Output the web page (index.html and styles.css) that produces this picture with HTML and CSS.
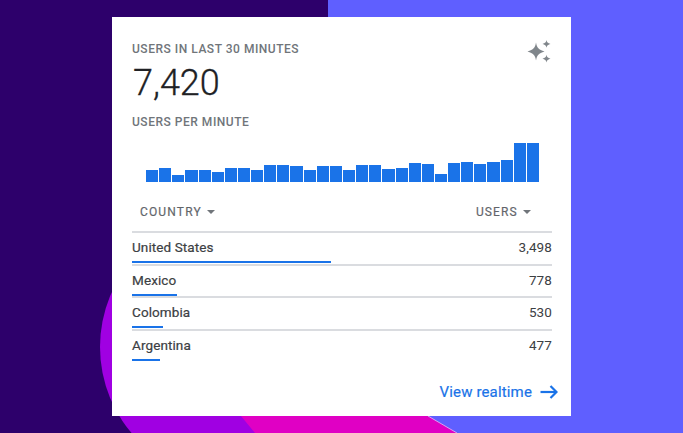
FILE: index.html
```html
<!DOCTYPE html>
<html lang="en">
<head>
    <meta charset="UTF-8">
    <title>Realtime card</title>
    <link rel="stylesheet" href="styles.css">
</head>
<body>
    <svg class="backdrop" width="683" height="433" viewBox="0 0 683 433">
        <rect width="683" height="433" fill="#5f5fff"/>
        <rect width="328" height="433" fill="#2d006b"/>
        <circle cx="233" cy="347" r="133" fill="#a000e2"/>
        <polygon points="241,416 428,416 457,433 255,433" fill="#e000c4"/>
        <line x1="428" y1="416" x2="457" y2="433" stroke="#d9a0f0" stroke-width="1"/>
    </svg>

    <div class="card">
        <div class="top">
            <div>
                <div class="label">USERS IN LAST 30 MINUTES</div>
                <div class="total">7,420</div>
            </div>
            <svg class="sparkle" width="24" height="24" viewBox="0 0 24 24">
                <path d="M9 2.5 C10 8 11.5 9.5 17.5 11.5 C11.5 13.5 10 15 9 20.5 C8 15 6.500 13.500 0.500 11.500 C6.500 9.500 8 8 9 2.500Z"/>
                <path d="M19.500 0 C20 2.400 20.500 2.900 23.500 3.900 C20.500 4.900 20 5.400 19.500 7.800 C19 5.400 18.500 4.900 15.500 3.900 C18.500 2.900 19 2.400 19.500 0Z"/>
                <path d="M19.500 14.800 C20 17.200 20.500 17.700 23.500 18.700 C20.500 19.700 20 20.200 19.500 22.600 C19 20.200 18.500 19.700 15.500 18.700 C18.500 17.700 19 17.200 19.500 14.800Z"/>
            </svg>
        </div>

        <div class="label sub">USERS PER MINUTE</div>

        <div class="chart" id="chart"></div>

        <div class="head">
            <span class="sort">COUNTRY <i class="caret"></i></span>
            <span class="sort">USERS <i class="caret"></i></span>
        </div>

        <div class="row">
            <div class="row-text"><span>United States</span><span class="num">3,498</span></div>
            <div class="meter" style="width: 199px"></div>
        </div>
        <div class="row">
            <div class="row-text"><span>Mexico</span><span class="num">778</span></div>
            <div class="meter" style="width: 45px"></div>
        </div>
        <div class="row">
            <div class="row-text"><span>Colombia</span><span class="num">530</span></div>
            <div class="meter" style="width: 31px"></div>
        </div>
        <div class="row last">
            <div class="row-text"><span>Argentina</span><span class="num">477</span></div>
            <div class="meter" style="width: 28px"></div>
        </div>

        <div class="foot">
            <span>View realtime</span>
            <svg width="18" height="14" viewBox="0 0 18 14" fill="none" stroke="#1a73e8" stroke-width="2.2">
                <path d="M0.5 7 H16"/>
                <path d="M10.5 1 L16.5 7 L10.5 13"/>
            </svg>
        </div>
    </div>

    <script>
        // users per minute
        let values = [12,14,7,12,12,10,14,14,12,17,17,16,12,16,16,12,17,17,13,14,19,18,8,19,20,18,20,22,39,39]
        let chart = document.getElementById("chart")
        for (let i = 0; i < values.length; i++) {
            let bar = document.createElement("div")
            bar.className = "bar"
            bar.style.height = values[i] + "px"
            chart.appendChild(bar)
        }
    </script>
</body>
</html>
```

FILE: styles.css
```css
html, body {
    margin: 0;
    height: 433px;
    overflow: hidden;
}

body {
    font-family: Roboto, Arial, sans-serif;
}

/* decoration behind the card */
.backdrop {
    position: absolute;
    left: 0;
    top: 0;
}

.card {
    position: relative;
    box-sizing: border-box;
    width: 459px;
    height: 399px;
    margin: 17px 0 0 112px;
    padding: 25px 19px 0 20px;
    background-color: #ffffff;
}

.top {
    display: flex;
    justify-content: space-between;
}

.label {
    font-size: 12px;
    line-height: 14px;
    font-weight: 500;
    letter-spacing: 0.52px;
    color: #70757a;
}

.total {
    margin-top: 6px;
    margin-left: 1px;
    font-size: 36px;
    line-height: 42px;
    font-weight: 300;
    -webkit-text-stroke: 0.3px #202124;
    color: #202124;
}

.sparkle {
    fill: #80868b;
    margin: -2px 1px 0 0;
}

.sub {
    margin-top: 11px;
}

.chart {
    display: grid;
    grid-template-columns: repeat(30, 1fr);
    column-gap: 1px;
    align-items: end;
    width: 393px;
    height: 40px;
    margin: 13px 0 0 14px;
}

.bar {
    background-color: #1a73e8;
}

.head {
    display: flex;
    justify-content: space-between;
    height: 51px;
    box-sizing: border-box;
    padding: 23px 21px 0 8px;
    border-bottom: 2px solid #dadce0;
}

.sort {
    font-size: 12px;
    line-height: 14px;
    font-weight: 400;
    letter-spacing: 1.15px;
    -webkit-text-stroke: 0.2px #70757a;
    color: #5f6368;
}

.caret {
    display: inline-block;
    width: 0;
    height: 0;
    margin-left: 1px;
    vertical-align: 2px;
    border-left: 4px solid transparent;
    border-right: 4px solid transparent;
    border-top: 4px solid #70757a;
}

.row {
    height: 32.5px;
    box-sizing: border-box;
    border-bottom: 2px solid #dadce0;
    padding-top: 6px;
}

.row.last {
    border-bottom: none;
}

.row-text {
    display: flex;
    justify-content: space-between;
    font-size: 13.5px;
    line-height: 16px;
    font-weight: 400;
    letter-spacing: 0.1px;
    -webkit-text-stroke: 0.2px #3c4043;
    color: #3c4043;
}

.num {
    -webkit-text-stroke: 0;
}

.meter {
    height: 2px;
    margin-top: 6px;
    background-color: #1a73e8;
}

.foot {
    display: flex;
    justify-content: flex-end;
    align-items: center;
    gap: 8px;
    margin-top: 20px;
    margin-right: -6px;
    font-size: 15px;
    line-height: 18px;
    font-weight: 400;
    letter-spacing: 0.15px;
    -webkit-text-stroke: 0.2px #1a73e8;
    color: #1a73e8;
}
```
